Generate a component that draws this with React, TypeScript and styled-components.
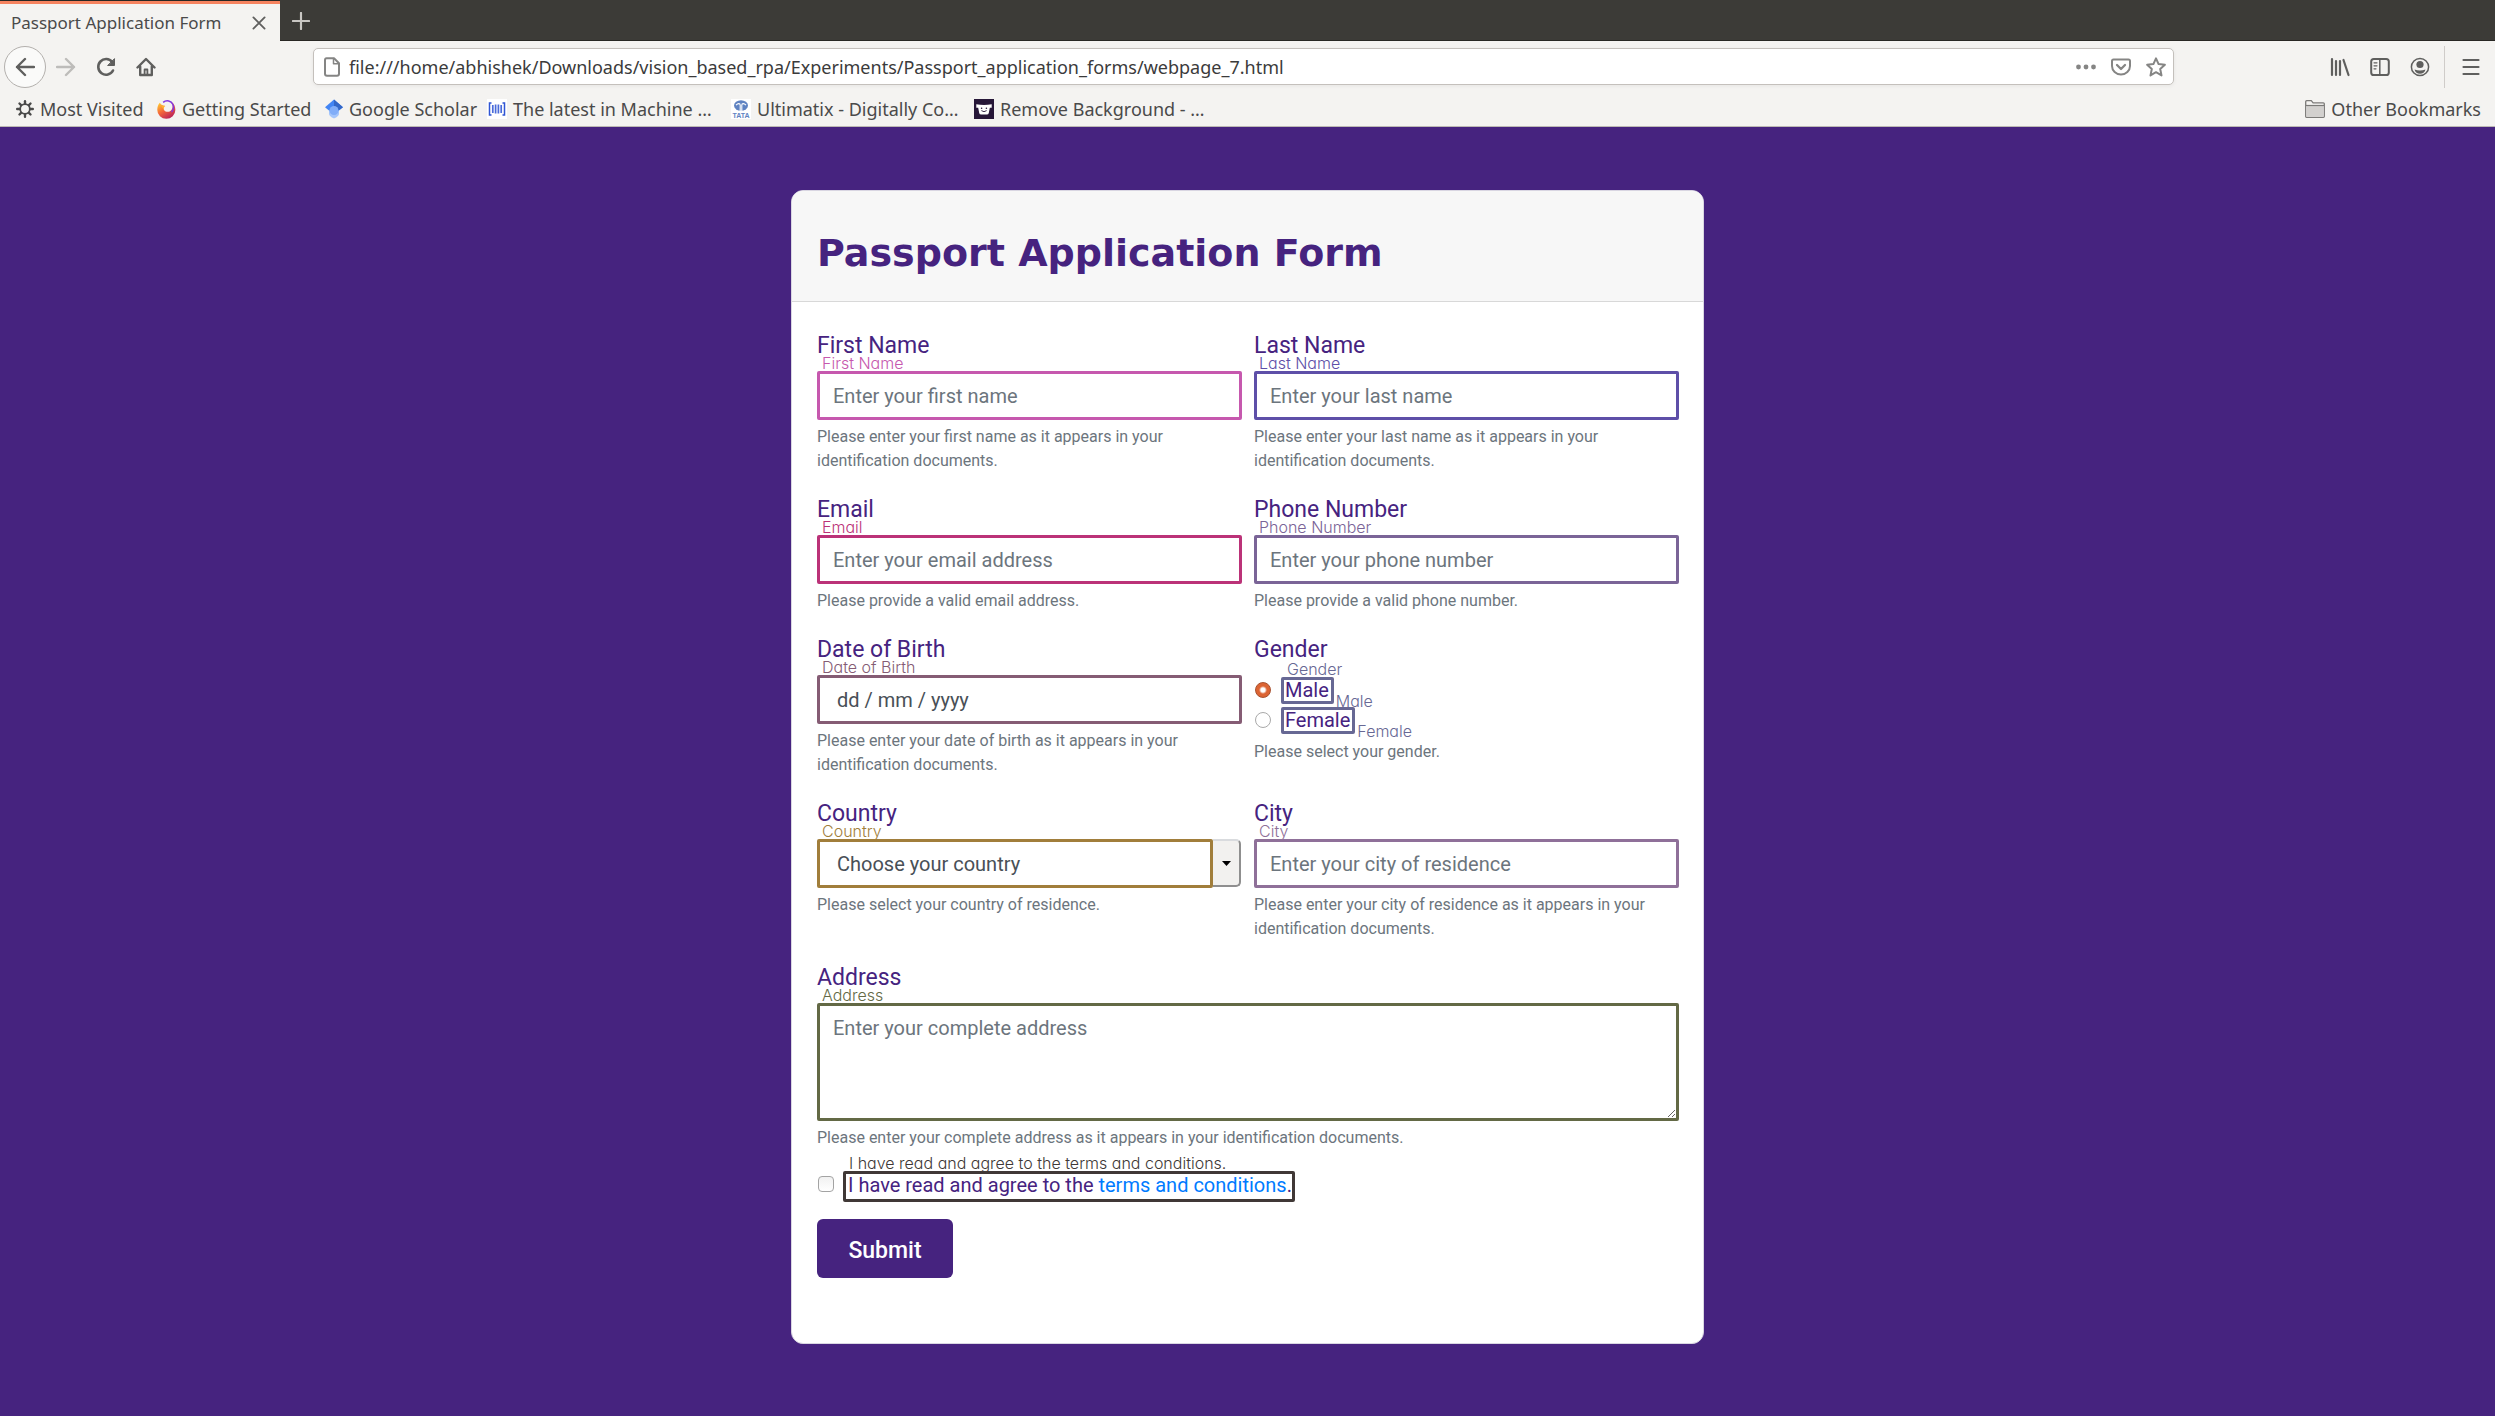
import React from 'react';
import styled, { createGlobalStyle } from 'styled-components';

const PURPLE = '#46237f';
const UI_FONT = '"Noto Sans", "Open Sans", sans-serif';

const GlobalStyle = createGlobalStyle`
  *, *::before, *::after { box-sizing: border-box; }
  body { margin: 0; background: ${PURPLE}; font-family: Roboto, "Liberation Sans", sans-serif; }
  button, input, select, textarea { font: inherit; margin: 0; }
  svg { flex: none; }
`;

/* ---------- browser window ---------- */

const Window = styled.div`
  display: flex;
  flex-direction: column;
  min-height: 100vh;
`;

const Chrome = styled.header`
  background: #f4f3f1;
  border-bottom: 1px solid #bdb9b5;
  color: #4a4a4a;
  font-family: ${UI_FONT};
  font-size: 18px;
`;

const TabStrip = styled.div`
  display: flex;
  height: 41px;
  background: #3c3b37;
  box-shadow: inset 0 -1px 0 #282724;
`;

const Tab = styled.div`
  display: flex;
  align-items: center;
  justify-content: space-between;
  width: 280px;
  padding: 3px 14px 0 11px;
  background: #f4f3f1;
  border-top: 1px solid #282724;
  box-shadow: inset 0 3px 0 #f6835f;
  font-size: 17px;
  white-space: nowrap;
`;

const IconButton = styled.button<{ $width?: number; $color?: string }>`
  display: flex;
  align-items: center;
  justify-content: center;
  width: ${p => p.$width ?? 20}px;
  padding: 0;
  border: 0;
  background: none;
  color: ${p => p.$color ?? '#5f5f5e'};
`;

const NavBar = styled.div`
  display: flex;
  align-items: center;
  height: 51px;
`;

const NavButtons = styled.div`
  display: flex;
  align-items: center;
  gap: 20px;
  width: 313px;
  padding-left: 4px;
`;

const BackButton = styled(IconButton)`
  height: 42px;
  margin-right: -10px;
  border: 1px solid #b3b0ad;
  border-radius: 50%;
  background: #fafaf9;
`;

const UrlBar = styled.div`
  display: flex;
  flex: 1;
  align-items: center;
  height: 37px;
  padding: 0 7px 0 8px;
  border: 1px solid #c4c0bc;
  border-radius: 5px;
  background: #fff;
  box-shadow: 0 1px 4px rgba(0, 0, 0, 0.06);
`;

const UrlInput = styled.input`
  flex: 1;
  min-width: 0;
  padding: 0 7px;
  border: 0;
  outline: 0;
  background: none;
  color: #3b3b3b;
`;

const UrlActions = styled.div`
  display: flex;
  gap: 15px;
`;

const Tools = styled.div`
  display: flex;
  align-items: center;
  justify-content: flex-end;
  gap: 20px;
  width: 321px;
  padding-right: 14px;
`;

const ToolDivider = styled.span`
  width: 1px;
  height: 42px;
  margin: 0 -4px 0 -6px;
  background: #cfccc9;
`;

const Bookmarks = styled.nav`
  display: flex;
  align-items: center;
  gap: 14px;
  height: 34px;
  padding: 0 14px 0 16px;
`;

const Bookmark = styled.a<{ $width?: number; $end?: boolean }>`
  display: flex;
  align-items: center;
  gap: 6px;
  width: ${p => (p.$width ? p.$width + 'px' : 'auto')};
  margin-left: ${p => (p.$end ? 'auto' : '0')};
  color: inherit;
  line-height: 24px;
  text-decoration: none;
  white-space: nowrap;
`;

/* ---------- page ---------- */

const Page = styled.main`
  flex: 1;
  padding: 63px 20px 72px;
`;

const Card = styled.section`
  max-width: 913px;
  margin: 0 auto;
  overflow: hidden;
  border: 1px solid #d9d6e2;
  border-radius: 12px;
  background: #fff;
`;

const CardHeader = styled.div`
  padding: 40px 25px 26px;
  border-bottom: 1px solid #d8d8d8;
  background: #f7f7f7;
`;

const Title = styled.h1`
  margin: 0;
  color: ${PURPLE};
  font: bold 38px/44px "DejaVu Sans", sans-serif;
`;

const Form = styled.form`
  display: grid;
  grid-template-columns: 1fr 1fr;
  column-gap: 12px;
  row-gap: 19px;
  padding: 26px 24px 65px 25px;
`;

const Group = styled.div`
  display: flex;
  flex-direction: column;
  min-width: 0;
`;

const WideGroup = styled(Group)`
  grid-column: 1 / -1;
`;

const Label = styled.label`
  margin-bottom: 8px;
  color: ${PURPLE};
  font-size: 23px;
  line-height: 35px;
`;

const Help = styled.small`
  margin-top: 5px;
  color: #6c757d;
  font-size: 16px;
  line-height: 24px;
`;

const Marked = styled.div`
  position: relative;
  display: flex;
`;

/* small caption floating just above the outlined control */
const Tag = styled.span<{ $color: string }>`
  position: absolute;
  left: 5px;
  bottom: 100%;
  color: ${p => p.$color};
  font-family: Inter, sans-serif;
  font-feature-settings: "cv11";
  font-size: 16px;
  font-weight: 300;
  line-height: 16px;
  white-space: nowrap;
`;

/* the same caption on a label that carries its own 3px outline */
const BoxTag = styled(Tag)`
  left: 3px;
  bottom: calc(100% + 3px);
`;

const SideTag = styled(Tag)`
  left: calc(100% + 5px);
  bottom: -8px;
`;

const TextInput = styled.input<{ $color: string; $inset?: boolean }>`
  width: 100%;
  height: 49px;
  padding: 0 ${p => (p.$inset ? 17 : 13)}px;
  border: 3px solid ${p => p.$color};
  border-radius: 2px;
  outline: 0;
  background: #fff;
  font-size: 20px;
  &::placeholder { color: ${p => (p.$inset ? '#495057' : '#6c757d')}; opacity: 1; }
`;

const Select = styled.select`
  flex: 1;
  min-width: 0;
  height: 49px;
  padding: 0 17px;
  border: 3px solid #a17e3b;
  border-radius: 2px;
  outline: 0;
  appearance: none;
  background: #fff;
  color: #495057;
  font-size: 20px;
`;

const SelectArrow = styled.span`
  display: flex;
  align-items: center;
  justify-content: center;
  width: 28px;
  height: 48px;
  margin-right: 1px;
  border: solid #8f8f8f;
  border-width: 2px 2px 2px 0;
  border-top-color: #d9dbde;
  border-radius: 0 5px 5px 0;
  background: #f2f1ef;
`;

const TextArea = styled.textarea`
  width: 100%;
  height: 118px;
  padding: 7px 13px;
  border: 3px solid #636945;
  border-radius: 2px;
  outline: 0;
  font-size: 20px;
  line-height: 30px;
  resize: vertical;
  &::placeholder { color: #6c757d; opacity: 1; }
`;

const GenderSet = styled.fieldset`
  display: flex;
  flex-direction: column;
  min-width: 0;
  margin: 0;
  padding: 0;
  border: 0;
`;

const Legend = styled.legend`
  margin-bottom: 8px;
  padding: 0;
  color: ${PURPLE};
  font-size: 23px;
  line-height: 35px;
`;

const Option = styled.div`
  display: flex;
  align-items: center;
  gap: 10px;
  height: 30px;
  padding-left: 1px;
`;

const Radio = styled.input`
  width: 16px;
  height: 16px;
  border: 1px solid #a9a9a9;
  border-radius: 50%;
  appearance: none;
  background: #fff;
  &:checked {
    border-color: #a8502e;
    background: radial-gradient(circle, #fff 0 2px, #dc6433 4px);
  }
`;

const OptionLabel = styled.label`
  position: relative;
  padding: 0 2px 0 1px;
  border: 3px solid #676894;
  border-radius: 2px;
  color: ${PURPLE};
  font-size: 20px;
  line-height: 21px;
`;

const Terms = styled.div`
  display: flex;
  align-items: flex-start;
  gap: 9px;
  margin-top: 21px;
  padding-left: 1px;
`;

const CheckBox = styled.input`
  width: 16px;
  height: 16px;
  margin-top: 5px;
  border: 1px solid #a3a3a3;
  border-radius: 4px;
  appearance: none;
  background: linear-gradient(#f1f1f1, #fff);
`;

const TermsLabel = styled.label`
  position: relative;
  padding: 0 0 2px 2px;
  border: 3px solid #403836;
  border-radius: 2px;
  color: ${PURPLE};
  font-size: 20px;
  line-height: 23px;
  white-space: nowrap;
`;

const Link = styled.a`
  color: #007bff;
  text-decoration: none;
`;

const Submit = styled.button`
  align-self: flex-start;
  width: 136px;
  height: 59px;
  margin-top: 17px;
  padding: 3px 0 0;
  border: 0;
  border-radius: 6px;
  background: ${PURPLE};
  color: #fff;
  font-size: 23px;
  font-weight: 500;
`;

/* ---------- icons ---------- */

const Icon = ({ children, size = 20, sw = 2 }: { children: React.ReactNode; size?: number; sw?: number }) => (
  <svg width={size} height={size} viewBox="0 0 20 20" fill="none" stroke="currentColor"
    strokeWidth={sw} strokeLinecap="round" strokeLinejoin="round" aria-hidden="true">{children}</svg>
);

const Gear = () => (
  <Icon size={18}>
    <circle cx="10" cy="10" r="5.4" />
    {[0, 45, 90, 135, 180, 225, 270, 315].map(a => (
      <path key={a} d="M10 3.8V1.3" strokeWidth="2.6" transform={`rotate(${a} 10 10)`} />
    ))}
  </Icon>
);

const Firefox = () => (
  <svg width="19" height="19" viewBox="0 0 20 20" aria-hidden="true">
    <defs>
      <linearGradient id="fx" x1="0.1" y1="0.1" x2="0.7" y2="1">
        <stop offset="0" stopColor="#ffc233" /><stop offset="0.45" stopColor="#f4673a" /><stop offset="1" stopColor="#b81f5b" />
      </linearGradient>
    </defs>
    <path d="M3 3C1 5 .3 7.600.3 10.400a9.500 9.400 0 0 0 19 0C19.300 7 18 4 15.500 2.200c1.400 3 1.500 6-.3 8.300-2 2.500-6 2.600-7.600.2C6.500 9 7 7 8.500 6 6.500 6 4 5.400 3 3z" fill="url(#fx)" />
    <path d="M6.500 2.500C10-.5 15 .8 16.600 4.500c1.300 3 .6 6.200-1.400 8.100" fill="none" stroke="#8336e0" strokeWidth="1.600" />
    <path d="M2.800 3.500c1 2.500 3.200 3.200 6 3.100-1.800.8-2.300 2.600-1.300 4.200" fill="#ffb52e" />
  </svg>
);

const Scholar = () => (
  <svg width="18" height="20" viewBox="0 0 18 20" aria-hidden="true">
    <path d="M4 9v5.500C4 17 7 18.500 9 19.500c2-1 5-2.500 5-5V9z" fill="#a4c5fb" />
    <path d="M9 .5 0 8.300l4 3.200h10l4-3.200z" fill="#4285f4" />
    <path d="M9 .5 18 8.300 13.500 11.500 9 7z" fill="#3367c7" />
    <circle cx="9" cy="11.500" r="4.500" fill="#81adf8" />
  </svg>
);

const Reader = () => (
  <svg width="20" height="20" viewBox="0 0 20 20" aria-hidden="true">
    <path d="M0 0h20v20H0z" fill="#fff" />
    <path d="M4.500 4H2.500v12h2M15.500 4h2v12h-2" fill="none" stroke="#2f55d4" strokeWidth="1.500" />
    <path d="M5.800 6v8M8.600 5.500v9M11.400 5.500v9M14.200 6v8" stroke="#4a6bda" strokeWidth="1.700" />
  </svg>
);

const Tata = () => (
  <svg width="20" height="20" viewBox="0 0 20 20" aria-hidden="true">
    <path d="M0 0h20v20H0z" fill="#fff" />
    <ellipse cx="10" cy="6.500" rx="7" ry="5.200" fill="#5f83c2" />
    <path d="M5 6.200C7 4 9.200 4.300 9.200 6v6M15 6.200c-2-2.200-4.200-1.900-4.200-.2v6" fill="none" stroke="#fff" strokeWidth="1.100" />
    <text x="10" y="19" textAnchor="middle" fontFamily="Liberation Sans, sans-serif" fontWeight="bold" fontSize="7" fill="#5f83c2">TATA</text>
  </svg>
);

const Bucket = () => (
  <svg width="20" height="20" viewBox="0 0 20 20" aria-hidden="true">
    <path d="M0 0h20v20H0z" fill="#271738" />
    <path d="M2.300 5.200q7.700 1.600 15.400 0v3.600h-1.900l-1 5.200q-.3 1.600-2 1.600H7.200q-1.700 0-2-1.600l-1-5.200H2.300z" fill="#fff" />
    <circle cx="7.600" cy="9.200" r=".8" fill="#271738" /><circle cx="12.400" cy="9.200" r=".8" fill="#271738" />
    <path d="M7.400 11.600q2.600 2.200 5.200 0" fill="none" stroke="#271738" strokeWidth=".9" />
  </svg>
);

const Folder = () => (
  <svg width="20" height="18" viewBox="0 0 20 18" aria-hidden="true">
    <path d="M.7 16.500V1.700q0-1 1-1h4.600l1.800 2.100h10.200q1 0 1 1v12.700q0 .8-.9.800H1.500q-.8 0-.8-.8z" fill="#f4f3f1" stroke="#7b7a78" strokeWidth="1.300" />
    <path d="M1.300 5.800h17.400v10.900H1.300z" fill="#d2d0ce" />
    <path d="M1 5.500h18" stroke="#7b7a78" strokeWidth="1.200" />
  </svg>
);

/* ---------- fields ---------- */

type FieldProps = { id: string; label: string; color: string; placeholder: string; help: string; type?: string; inset?: boolean };

const Field = ({ id, label, color, placeholder, help, type = 'text', inset }: FieldProps) => (
  <Group>
    <Label htmlFor={id}>{label}</Label>
    <Marked>
      <Tag $color={color} aria-hidden="true">{label}</Tag>
      <TextInput id={id} type={type} placeholder={placeholder} $color={color} $inset={inset} />
    </Marked>
    <Help>{help}</Help>
  </Group>
);

const bookmarks = [
  { text: 'Most Visited', icon: <Gear />, width: 127 },
  { text: 'Getting Started', icon: <Firefox />, width: 154 },
  { text: 'Google Scholar', icon: <Scholar />, width: 148 },
  { text: 'The latest in Machine …', icon: <Reader />, width: 230 },
  { text: 'Ultimatix - Digitally Co…', icon: <Tata />, width: 229 },
  { text: 'Remove Background - …', icon: <Bucket />, width: 226 },
];

export default function App() {
  return (
    <Window>
      <GlobalStyle />
      <Chrome>
        <TabStrip>
          <Tab>
            <span>Passport Application Form</span>
            <IconButton $width={14} aria-label="Close tab"><Icon size={14} sw={2.600}><path d="M2 2l16 16M18 2 2 18" /></Icon></IconButton>
          </Tab>
          <IconButton $width={42} $color="#c9c7c3" aria-label="New tab"><Icon size={18} sw={2.400}><path d="M10 1v18M1 10h18" /></Icon></IconButton>
        </TabStrip>
        <NavBar>
          <NavButtons>
            <BackButton $width={42} aria-label="Back"><Icon sw={2.400}><path d="M19 10H2M10 2l-8 8 8 8" /></Icon></BackButton>
            <IconButton $color="#bdbcba" aria-label="Forward"><Icon sw={2.400}><path d="M1 10h17M10 2l8 8-8 8" /></Icon></IconButton>
            <IconButton aria-label="Reload"><Icon sw={2.600}><path d="M16.200 5A7.800 7.800 0 1 0 17 13.500" /><path d="M18.500 2v6.500H12z" fill="currentColor" strokeWidth="1" /></Icon></IconButton>
            <IconButton aria-label="Home"><Icon sw={2.400}><path d="M1.500 10.500 10 2l8.500 8.500M4.200 9.500V18h11.600V9.500" /><path d="M8.600 17.500v-5h2.800v5" strokeWidth="1.800" /></Icon></IconButton>
          </NavButtons>
          <UrlBar>
            <Icon size={20} sw={2}><path d="M4.500 1.200H12l5 5v10.600q0 2-2 2H5q-2 0-2-2V3.200q0-2 1.500-2z" stroke="#858584" /><path d="M11.500 1.500v5.200H17" stroke="#858584" strokeWidth="1.500" /></Icon>
            <UrlInput aria-label="Address" defaultValue="file:///home/abhishek/Downloads/vision_based_rpa/Experiments/Passport_application_forms/webpage_7.html" />
            <UrlActions>
              <IconButton $color="#858584" aria-label="Page actions"><Icon><g fill="currentColor" stroke="none"><circle cx="2.500" cy="10" r="2.400" /><circle cx="10" cy="10" r="2.400" /><circle cx="17.500" cy="10" r="2.400" /></g></Icon></IconButton>
              <IconButton $color="#858584" aria-label="Save to Pocket"><Icon><path d="M2.500 2.500h15q1.500 0 1.500 1.500v5a9 8.500 0 0 1-18 0V4q0-1.500 1.500-1.500z" /><path d="M6 8l4 4 4-4" strokeWidth="2.300" /></Icon></IconButton>
              <IconButton $color="#858584" aria-label="Bookmark this page"><Icon><path d="M10 1.300l2.600 5.800 6.300.7-4.700 4.200 1.300 6.400-5.500-3.200-5.500 3.200 1.300-6.400L1.100 7.800l6.300-.7z" /></Icon></IconButton>
            </UrlActions>
          </UrlBar>
          <Tools>
            <IconButton aria-label="Library"><Icon sw={2.200}><path d="M2 2v16M6 4v14M10 4v14" /><path d="M13.500 3l5 15" /></Icon></IconButton>
            <IconButton aria-label="Sidebars"><Icon sw={2}><rect x="1.200" y="2" width="17.600" height="16" rx="2.600" /><path d="M9.800 2v16" strokeWidth="1.500" /><path d="M4 5.800h3M4 8.800h3M4 11.800h2" strokeWidth="1.200" /></Icon></IconButton>
            <IconButton aria-label="Account"><Icon sw={1.500}><circle cx="10" cy="10" r="8.600" /><circle cx="10" cy="7.500" r="3.600" fill="currentColor" stroke="none" /><path d="M4.500 12.400q5.500 2.200 11 0-1.300 4.300-5.500 4.300t-5.500-4.300z" fill="currentColor" stroke="none" /></Icon></IconButton>
            <ToolDivider />
            <IconButton aria-label="Menu"><Icon sw={2.200}><path d="M2.500 3h15M2.500 10h15M2.500 17h15" /></Icon></IconButton>
          </Tools>
        </NavBar>
        <Bookmarks aria-label="Bookmarks">
          {bookmarks.map(b => (
            <Bookmark key={b.text} href="#" $width={b.width}>{b.icon}{b.text}</Bookmark>
          ))}
          <Bookmark href="#" $end><Folder />Other Bookmarks</Bookmark>
        </Bookmarks>
      </Chrome>

      <Page>
        <Card>
          <CardHeader><Title>Passport Application Form</Title></CardHeader>
          <Form onSubmit={e => e.preventDefault()}>
            <Field id="first" label="First Name" color="#c658ae" placeholder="Enter your first name" help="Please enter your first name as it appears in your identification documents." />
            <Field id="last" label="Last Name" color="#5e4fa8" placeholder="Enter your last name" help="Please enter your last name as it appears in your identification documents." />
            <Field id="email" type="email" label="Email" color="#bb3278" placeholder="Enter your email address" help="Please provide a valid email address." />
            <Field id="phone" type="tel" label="Phone Number" color="#7a6497" placeholder="Enter your phone number" help="Please provide a valid phone number." />
            <Field id="dob" label="Date of Birth" color="#855c74" placeholder="dd / mm / yyyy" help="Please enter your date of birth as it appears in your identification documents." inset />
            <GenderSet>
              <Legend>Gender</Legend>
              <Option>
                <Radio type="radio" name="gender" id="male" defaultChecked />
                <OptionLabel htmlFor="male">
                  <BoxTag $color="#676894" aria-hidden="true">Gender</BoxTag>Male<SideTag $color="#676894" aria-hidden="true">Male</SideTag>
                </OptionLabel>
              </Option>
              <Option>
                <Radio type="radio" name="gender" id="female" />
                <OptionLabel htmlFor="female">Female<SideTag $color="#676894" aria-hidden="true">Female</SideTag></OptionLabel>
              </Option>
              <Help>Please select your gender.</Help>
            </GenderSet>
            <Group>
              <Label htmlFor="country">Country</Label>
              <Marked>
                <Tag $color="#a17e3b" aria-hidden="true">Country</Tag>
                <Select id="country" defaultValue=""><option value="">Choose your country</option></Select>
                <SelectArrow aria-hidden="true"><svg width="9" height="5" viewBox="0 0 9 5"><path d="M0 0h9L4.500 5z" /></svg></SelectArrow>
              </Marked>
              <Help>Please select your country of residence.</Help>
            </Group>
            <Field id="city" label="City" color="#8f7099" placeholder="Enter your city of residence" help="Please enter your city of residence as it appears in your identification documents." />
            <WideGroup>
              <Label htmlFor="address">Address</Label>
              <Marked>
                <Tag $color="#636945" aria-hidden="true">Address</Tag>
                <TextArea id="address" placeholder="Enter your complete address" />
              </Marked>
              <Help>Please enter your complete address as it appears in your identification documents.</Help>
              <Terms>
                <CheckBox type="checkbox" id="terms" />
                <TermsLabel htmlFor="terms">
                  <BoxTag $color="#403836" aria-hidden="true">I have read and agree to the terms and conditions.</BoxTag>
                  I have read and agree to the <Link href="#">terms and conditions</Link>.
                </TermsLabel>
              </Terms>
              <Submit type="submit">Submit</Submit>
            </WideGroup>
          </Form>
        </Card>
      </Page>
    </Window>
  );
}
